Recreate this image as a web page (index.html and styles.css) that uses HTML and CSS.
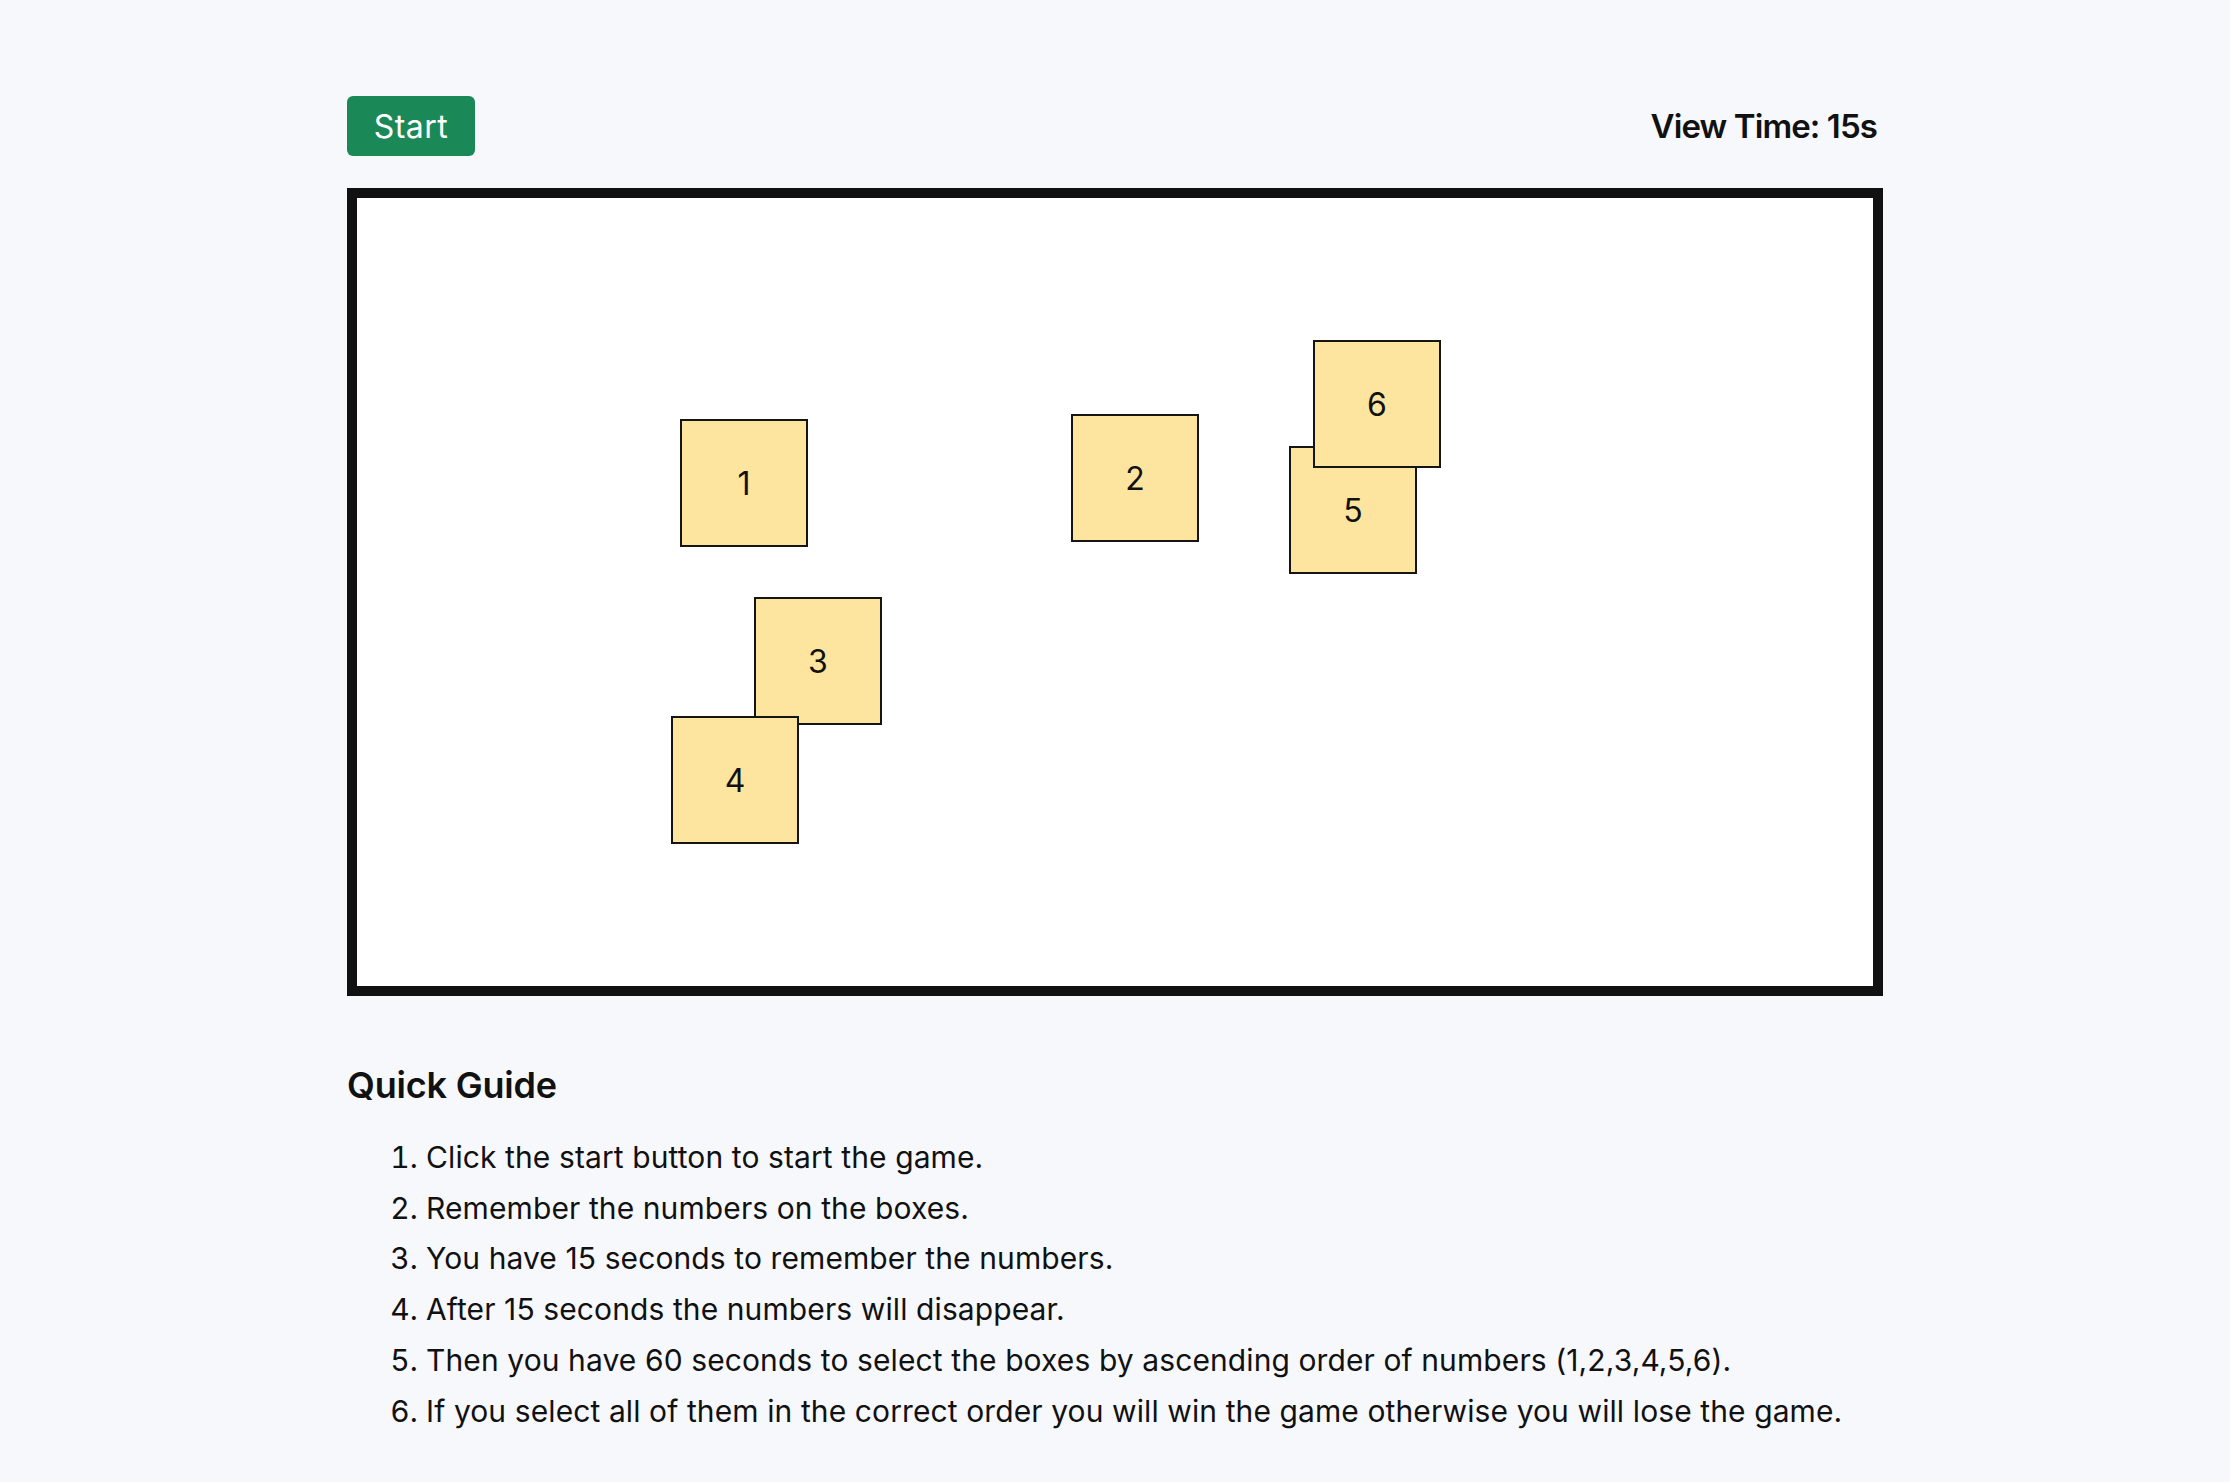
FILE: index.html
```html
<!DOCTYPE html>
<html lang="en">
<head>
<meta charset="utf-8">
<title>Memory Boxes</title>
<link rel="stylesheet" href="styles.css">
</head>
<body>
<main class="container">
  <header class="toolbar">
    <button class="start-btn" type="button">Start</button>
    <div class="view-time">View Time: 15s</div>
  </header>
  <section class="board">
    <div class="box box-1">1</div>
    <div class="box box-2">2</div>
    <div class="box box-3">3</div>
    <div class="box box-4">4</div>
    <div class="box box-5">5</div>
    <div class="box box-6">6</div>
  </section>
  <section class="guide">
    <h2 class="guide-title">Quick Guide</h2>
    <ol class="guide-list">
      <li>Click the start button to start the game.</li>
      <li>Remember the numbers on the boxes.</li>
      <li>You have 15 seconds to remember the numbers.</li>
      <li>After 15 seconds the numbers will disappear.</li>
      <li>Then you have 60 seconds to select the boxes by ascending order of numbers (1,2,3,4,5,6).</li>
      <li>If you select all of them in the correct order you will win the game otherwise you will lose the game.</li>
    </ol>
  </section>
</main>
</body>
</html>
```
FILE: styles.css
```css
* { box-sizing: border-box; }
html, body { margin: 0; padding: 0; }
body {
  background: #f7f8fc;
  color: #111111;
  font-family: Inter, "Noto Sans", sans-serif;
}
.container {
  max-width: 1536px;
  margin: 0 auto;
  padding-top: 96px;
  padding-bottom: 40px;
}
.toolbar {
  display: flex;
  justify-content: space-between;
  align-items: center;
  height: 60px;
}
.start-btn {
  height: 60px;
  width: 128px;
  padding: 0;
  border: none;
  border-radius: 6px;
  background: #1b8957;
  color: #ffffff;
  font-family: Inter, "Noto Sans", sans-serif;
  font-size: 32px;
  font-weight: 400;
  letter-spacing: 0.5px;
  cursor: pointer;
}
.view-time {
  font-size: 33px;
  font-weight: 600;
  letter-spacing: -0.9px;
  padding-right: 6px;
}
.board {
  position: relative;
  margin-top: 32px;
  height: 808px;
  border: 10px solid #111111;
  background: #ffffff;
}
.box {
  position: absolute;
  width: 128px;
  height: 128px;
  border: 2px solid #151515;
  background: #fee59f;
  display: flex;
  align-items: center;
  justify-content: center;
  font-size: 32px;
  font-weight: 400;
  color: #111111;
}
.box-1 { left: 323px; top: 221px; }
.box-2 { left: 714px; top: 216px; }
.box-3 { left: 397px; top: 399px; }
.box-4 { left: 314px; top: 518px; }
.box-5 { left: 932px; top: 248px; }
.box-6 { left: 956px; top: 142px; }
.guide-title {
  margin: 67px 0 0;
  font-size: 36px;
  line-height: 44px;
  font-weight: 600;
  letter-spacing: -0.2px;
}
.guide-list {
  margin: 25px 0 0;
  padding-left: 79px;
  font-size: 30px;
  line-height: 50.7px;
  letter-spacing: 0.1px;
}
.guide-list li { padding-left: 0; }
```
